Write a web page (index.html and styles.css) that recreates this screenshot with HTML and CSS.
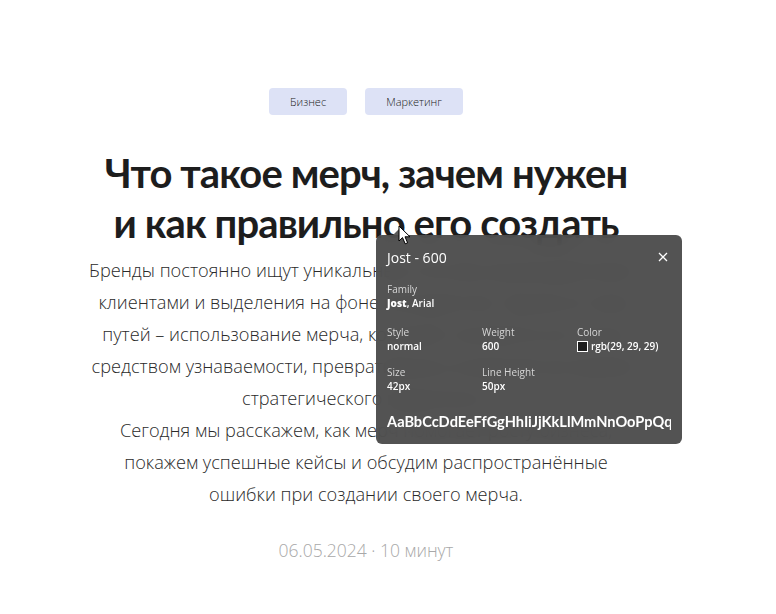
FILE: index.html
```
<!DOCTYPE html>
<html lang="ru">
<head>
<meta charset="utf-8">
<title>Мерч</title>
<link rel="stylesheet" href="styles.css">
</head>
<body>
<main class="page">
  <div class="tags">
    <span class="tag">Бизнес</span>
    <span class="tag">Маркетинг</span>
  </div>
  <h1 class="title">Что такое мерч, зачем нужен<br>и как правильно его создать</h1>
  <p class="lead">Бренды постоянно ищут уникальные способы взаимодействия с<br>клиентами и выделения на фоне конкурентов. Одним из таких<br>путей – использование мерча, который становится не только<br>средством узнаваемости, превратившись в важный инструмент<br>стратегического маркетинга.<br>Сегодня мы расскажем, как мерч помогает росту бизнеса,<br>покажем успешные кейсы и обсудим распространённые<br>ошибки при создании своего мерча.</p>
  <div class="meta">06.05.2024 · 10 минут</div>
</main>

<div class="caret"></div>
<div class="inspector">
  <div class="insp-head">
    <span class="insp-title">Jost - 600</span>
    <svg class="insp-close" width="10" height="10" viewBox="0 0 10 10"><path d="M1 1L9 9M9 1L1 9" stroke="#fff" stroke-width="1.3"/></svg>
  </div>
  <div class="insp-field">
    <div class="insp-label">Family</div>
    <div class="insp-value"><b>Jost</b>, Arial</div>
  </div>
  <div class="insp-grid">
    <div class="insp-field">
      <div class="insp-label">Style</div>
      <div class="insp-value">normal</div>
    </div>
    <div class="insp-field">
      <div class="insp-label">Weight</div>
      <div class="insp-value">600</div>
    </div>
    <div class="insp-field">
      <div class="insp-label">Color</div>
      <div class="insp-value"><span class="swatch"></span>rgb(29, 29, 29)</div>
    </div>
    <div class="insp-field">
      <div class="insp-label">Size</div>
      <div class="insp-value">42px</div>
    </div>
    <div class="insp-field">
      <div class="insp-label">Line Height</div>
      <div class="insp-value">50px</div>
    </div>
  </div>
  <div class="insp-sample">AaBbCcDdEeFfGgHhIiJjKkLlMmNnOoPpQqRrSsTt</div>
</div>

<svg class="cursor" width="14" height="21" viewBox="0 0 14 21"><path d="M1 1L1 16L4.5 12.6L7.2 18.8L9.6 17.8L7 11.8L12 11.8Z" fill="#fff" stroke="#000" stroke-width="1" stroke-linejoin="round"/></svg>
</body>
</html>
```
FILE: styles.css
```
html, body {
  margin: 0;
  padding: 0;
  background: #fff;
}

.page {
  width: 732px;
  padding-top: 88px;
  text-align: center;
  font-family: "Open Sans", "Liberation Sans", sans-serif;
  color: #1d1d1d;
}

.tags {
  display: flex;
  justify-content: center;
  gap: 18px;
}

.tag {
  display: inline-flex;
  align-items: center;
  height: 27px;
  padding: 0 21px;
  border-radius: 4px;
  background: #dde2f6;
  font-size: 11px;
  font-weight: 300;
  color: #222;
}

.title {
  margin: 33px 0 0;
  font-family: "Lato", "Liberation Sans", sans-serif;
  font-size: 40px;
  line-height: 50px;
  letter-spacing: -0.9px;
  font-weight: 700;
  color: #1d1d1d;
}

.lead {
  margin: 6px 0 0;
  font-size: 18.2px;
  line-height: 32px;
  font-weight: 300;
  color: #2a2a2a;
}

.meta {
  margin-top: 28px;
  font-size: 17.5px;
  line-height: 24px;
  font-weight: 300;
  color: #a8a8a8;
}

.caret {
  position: absolute;
  left: 393px;
  top: 229px;
  width: 0;
  height: 0;
  border-left: 6px solid transparent;
  border-right: 6px solid transparent;
  border-bottom: 6px solid #5a5a5a;
}

.inspector {
  position: absolute;
  left: 376px;
  top: 235px;
  width: 306px;
  height: 209px;
  box-sizing: border-box;
  padding: 14px 11px 0;
  border-radius: 6px;
  background: rgba(72, 72, 72, 0.94);
  backdrop-filter: blur(10px);
  color: #fff;
  font-family: "Open Sans", "Noto Sans", sans-serif;
  overflow: hidden;
}

.insp-head {
  display: flex;
  justify-content: space-between;
  align-items: center;
  height: 16px;
}

.insp-title {
  font-size: 14px;
}

.insp-close {
  margin-right: 3px;
}

.insp-head + .insp-field {
  margin-top: 17px;
}

.insp-label {
  font-size: 10px;
  line-height: 14px;
  color: #d6d6d6;
}

.insp-value {
  font-size: 10px;
  line-height: 14px;
  font-weight: 600;
  display: flex;
  align-items: center;
}

.insp-value b {
  font-weight: 800;
}

.insp-grid {
  margin-top: 15px;
  display: grid;
  grid-template-columns: 95px 95px 95px;
  row-gap: 12px;
}

.swatch {
  width: 9px;
  height: 9px;
  border: 1px solid #fff;
  background: #1d1d1d;
  margin-right: 3px;
}

.insp-sample {
  margin-top: 20px;
  width: 284px;
  overflow: hidden;
  font-family: "Lato", "Liberation Sans", sans-serif;
  font-weight: 700;
  font-size: 14.6px;
  white-space: nowrap;
}

.cursor {
  position: absolute;
  left: 398px;
  top: 225px;
}
```
